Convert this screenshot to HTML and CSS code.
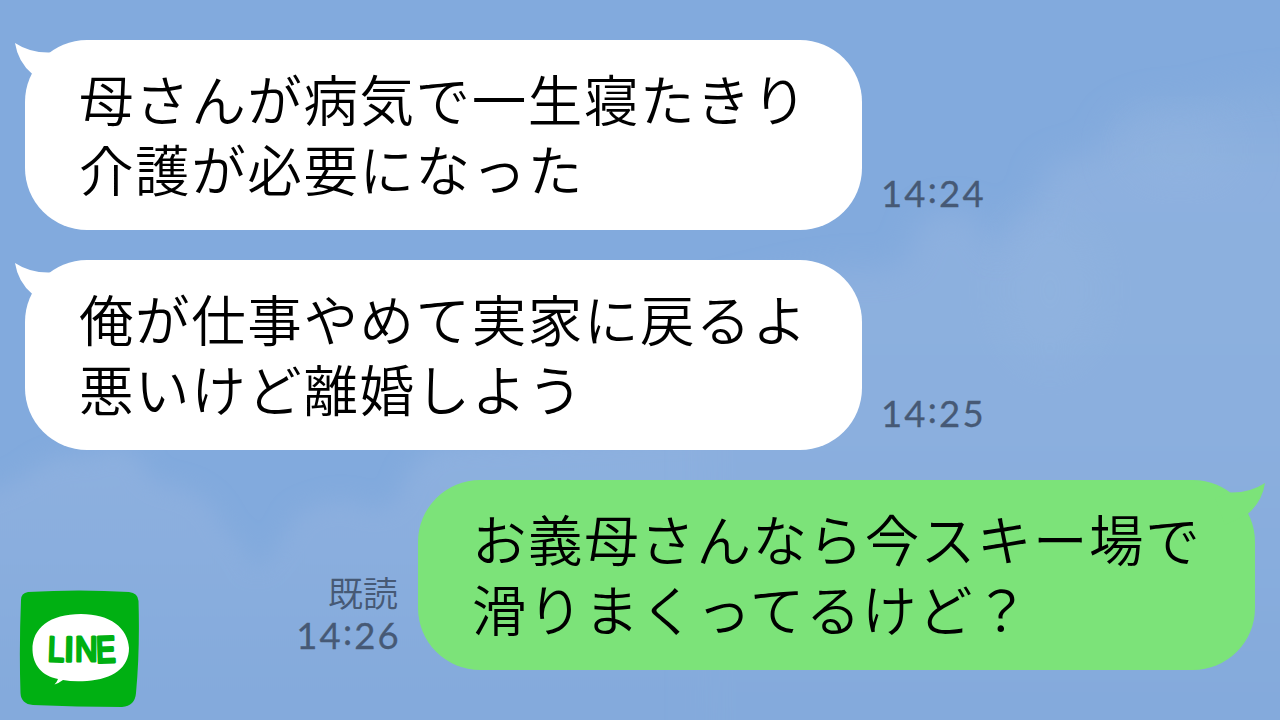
FILE: index.html
```html
<!DOCTYPE html>
<html lang="ja">
<head>
<meta charset="utf-8">
<title>トーク</title>
<link rel="stylesheet" href="styles.css">
</head>
<body>
<main class="chat">
  <svg class="sky" viewBox="0 0 1280 720" aria-hidden="true">
    <defs>
      <filter id="soft" x="-10%" y="-10%" width="120%" height="120%"><feGaussianBlur stdDeviation="11"/></filter>
      <filter id="softer" x="-10%" y="-10%" width="120%" height="120%"><feGaussianBlur stdDeviation="15"/></filter>
      <filter id="haze" x="-40%" y="-40%" width="180%" height="180%"><feGaussianBlur stdDeviation="28"/></filter>
      <linearGradient id="fadeR" gradientUnits="userSpaceOnUse" x1="0" y1="80" x2="0" y2="720">
        <stop offset="0" stop-color="#85acdd"/><stop offset=".14" stop-color="#8db0df"/><stop offset=".55" stop-color="#8bafde"/><stop offset="1" stop-color="#84aadc"/>
      </linearGradient>
      <linearGradient id="fadeL" gradientUnits="userSpaceOnUse" x1="0" y1="450" x2="0" y2="700">
        <stop offset="0" stop-color="#8db0df"/><stop offset=".4" stop-color="#8aaede"/><stop offset="1" stop-color="#84aadc"/>
      </linearGradient>
    </defs>
    <path filter="url(#soft)" fill="url(#fadeL)" d="M-30 495Q10 490 40 465Q65 452 90 457Q110 440 140 457Q145 485 180 487Q213 497 225 530Q245 545 255 570Q280 550 295 515Q330 495 355 502Q380 518 400 495Q405 465 440 445L760 430V780H-30Z"/>
    <path filter="url(#softer)" fill="url(#fadeR)" d="M700 300Q800 270 862 268Q895 274 910 255Q915 210 955 210Q982 213 988 240L1000 257Q1005 215 1040 204Q1035 165 1070 158Q1105 155 1110 125Q1140 97 1190 102Q1235 82 1340 80V780H700Z"/>
    <ellipse filter="url(#haze)" cx="1050" cy="290" rx="50" ry="80" fill="#97b8e1" opacity=".35"/>
    <ellipse filter="url(#haze)" cx="1180" cy="150" rx="55" ry="30" fill="#97b8e1" opacity=".4"/>
  </svg>

  <section class="row row-in">
    <div class="bubble bubble-in">
      <svg class="tail tail-in" viewBox="0 0 50 45" aria-hidden="true"><path d="M0 3Q15 13 35 12.500L50 18L40 45L17.300 34Q3 22 0 3Z"/></svg>
      <p class="text">母さんが病気で一生寝たきり<br>介護が必要になった</p>
    </div>
    <time class="time">14<span class="colon">:</span>24</time>
  </section>

  <section class="row row-in">
    <div class="bubble bubble-in">
      <svg class="tail tail-in" viewBox="0 0 50 45" aria-hidden="true"><path d="M0 3Q15 13 35 12.500L50 18L40 45L17.300 34Q3 22 0 3Z"/></svg>
      <p class="text">俺が仕事やめて実家に戻るよ<br>悪いけど離婚しよう</p>
    </div>
    <time class="time">14<span class="colon">:</span>25</time>
  </section>

  <section class="row row-out">
    <div class="meta">
      <span class="read">既読</span>
      <time class="time">14<span class="colon">:</span>26</time>
    </div>
    <div class="bubble bubble-out">
      <svg class="tail tail-out" viewBox="0 0 50 45" aria-hidden="true"><path d="M50 3Q35 13 15 12.500L0 18L10 45L32.700 34Q47 22 50 3Z"/></svg>
      <p class="text">お義母さんなら今スキー場で<br>滑りまくってるけど？</p>
    </div>
  </section>

  <svg class="logo" viewBox="0 0 120 120" role="img" aria-label="LINE">
    <path fill="#00b012" d="M9 2Q60 -1 110 2Q119 3 119.500 11Q121 60 117 103Q116 116 103 117Q58 117 14 115Q2 114 1.500 103Q0 58 2 10Q2 3 9 2Z"/>
    <path fill="#fff" d="M62 24C91 24 109 38 110 58C110 78 94 89 68 91Q54 92 44 90Q40 93 35.500 94.500Q38 92 39 89C23 86 14 75 13.500 60C13 38 31 24 62 24Z"/>
    <g class="logo-text">
      <text transform="translate(28.400 71) rotate(2) scale(.84 1)">L</text>
      <text transform="translate(45 71.200) rotate(1)">I</text>
      <text transform="translate(56 71.200) scale(.89 1)">N</text>
      <text transform="translate(77.600 72.500) rotate(-2) scale(.83 1.050)">E</text>
    </g>
  </svg>
</main>
</body>
</html>
```
FILE: styles.css
```css
* { box-sizing: border-box; }
body { margin: 0; }

.chat {
  position: relative;
  width: 1280px;
  height: 720px;
  overflow: hidden;
  padding: 40px 25px 0;
  display: flex;
  flex-direction: column;
  gap: 30px;
  background: #82aadd;
  font-family: "Liberation Sans", "Noto Sans CJK JP", sans-serif;
}

.sky {
  position: absolute;
  inset: 0;
  width: 1280px;
  height: 720px;
}

.row {
  position: relative;
  display: flex;
  align-items: flex-end;
  gap: 20px;
}
.row-out { justify-content: flex-end; }

.bubble {
  position: relative;
  width: 837px;
  height: 190px;
  padding: 23px 54px 0;
  border-radius: 62px;
}
.bubble-in { background: #fff; color: #fff; }
.bubble-out { background: #7ce379; color: #7ce379; }

.tail {
  position: absolute;
  top: 0;
  width: 50px;
  height: 45px;
  fill: currentColor;
}
.tail-in { left: -10px; }
.tail-out { right: -10px; }

.text {
  position: relative;
  margin: 0;
  font-family: "Noto Sans CJK JP", sans-serif;
  font-size: 54.500px;
  font-weight: 350;
  line-height: 70px;
  letter-spacing: 1.600px;
  white-space: nowrap;
  color: #000;
}

.time {
  font-family: Lato, sans-serif;
  font-size: 36.500px;
  line-height: 42px;
  letter-spacing: 2.200px;
  color: #465975;
  margin-left: -1px;
  padding-bottom: 16px;
  -webkit-text-stroke: 0.300px #465975;
}
.colon {
  position: relative;
  top: -4px;
}

.meta {
  display: flex;
  flex-direction: column;
  align-items: flex-end;
}
.meta .time { margin-right: -3px; padding-bottom: 14px; }

.read {
  font-family: "Noto Sans CJK JP", sans-serif;
  font-size: 35px;
  font-weight: 350;
  line-height: 40px;
  padding-bottom: 2px;
  color: #465975;
}

.logo {
  position: absolute;
  left: 19px;
  top: 590px;
  width: 120px;
  height: 120px;
}
.logo-text {
  font: 400 35px "Liberation Sans", sans-serif;
  fill: #00b012;
  stroke: #00b012;
  stroke-width: 3px;
  stroke-linejoin: round;
}
```
